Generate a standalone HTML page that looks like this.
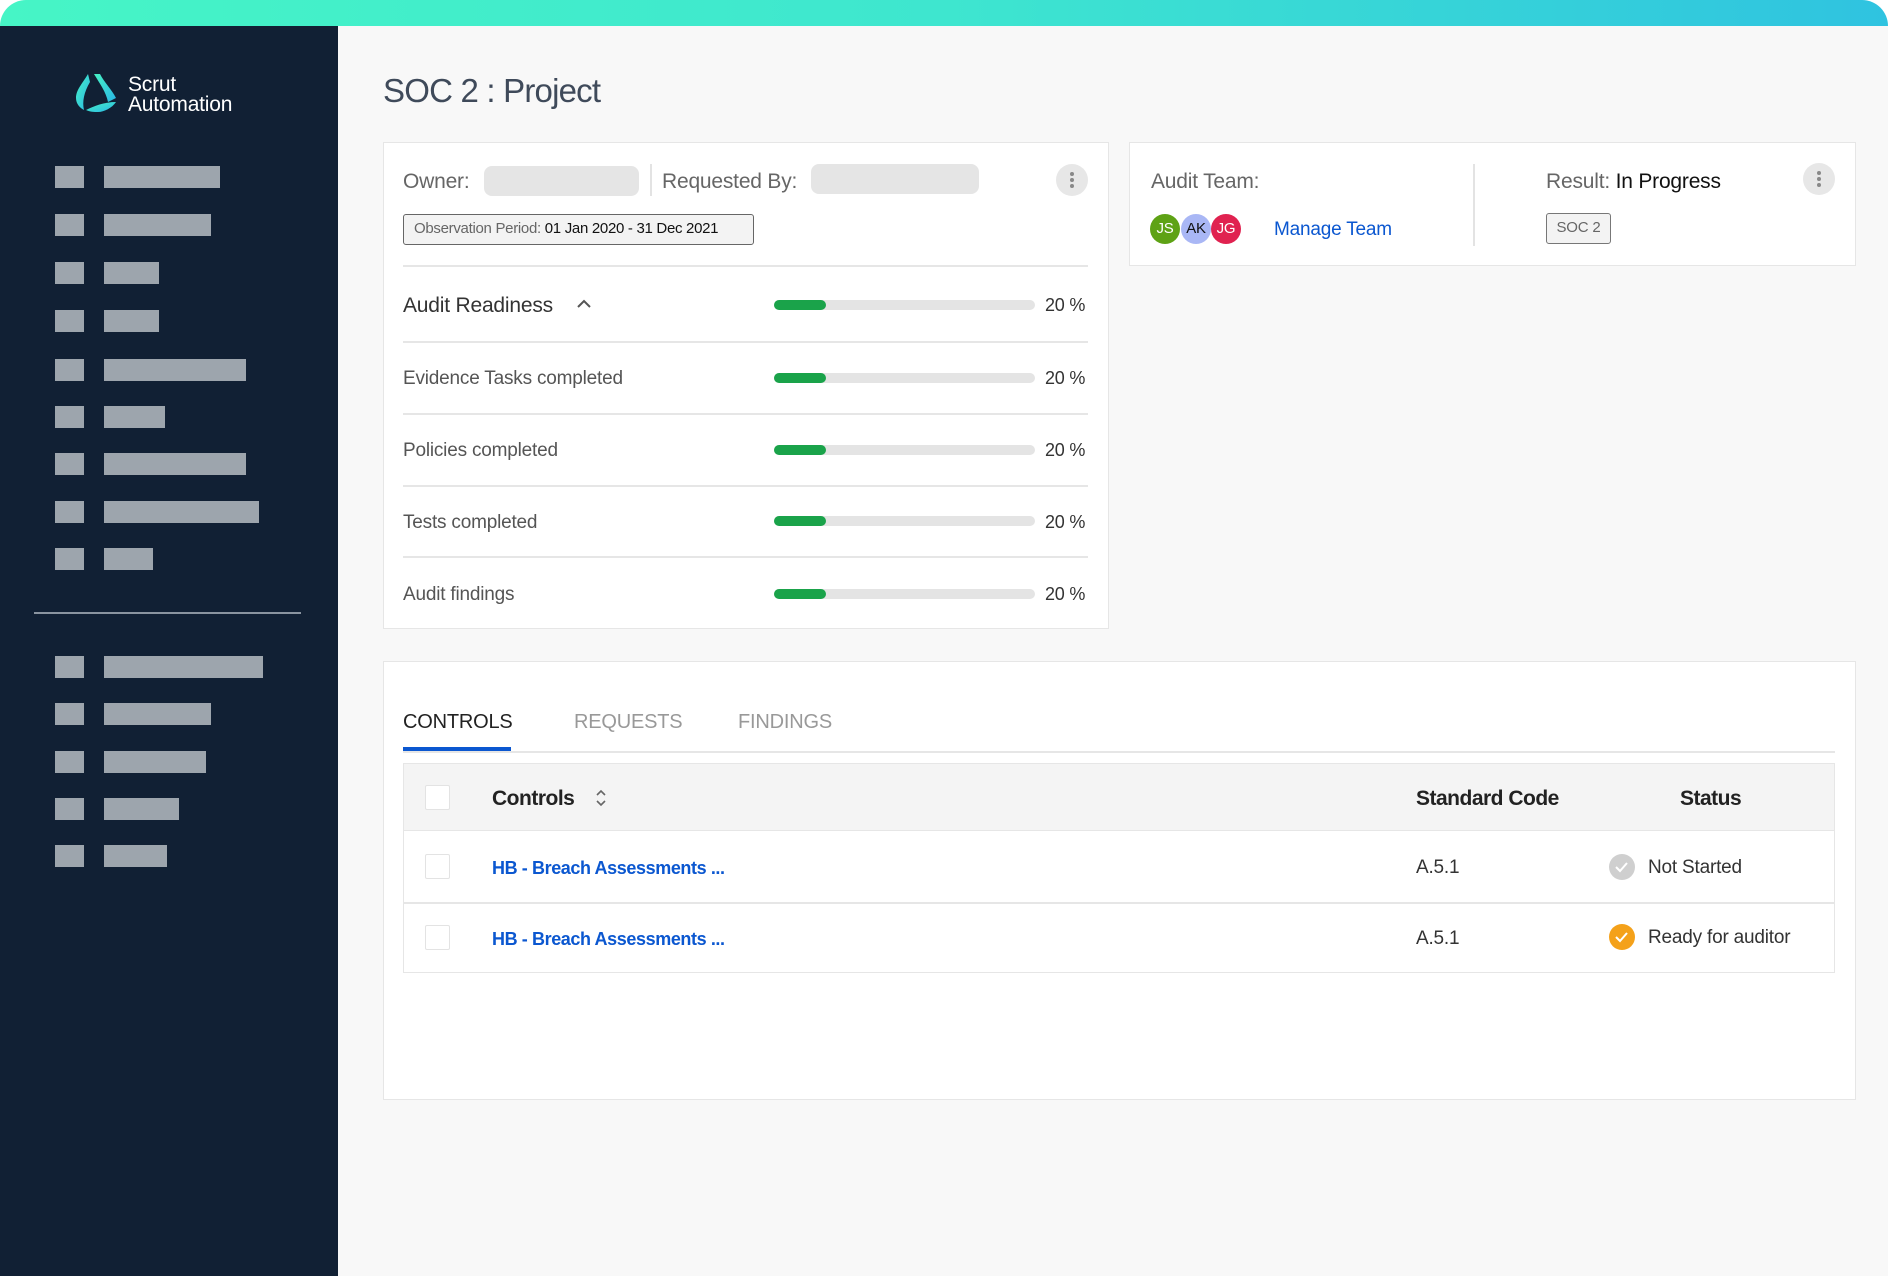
<!DOCTYPE html>
<html><head><meta charset="utf-8"><style>
*{box-sizing:border-box;margin:0;padding:0}
body{width:1888px;height:1276px;overflow:hidden;background:#fff;font-family:"Liberation Sans",sans-serif;position:relative;letter-spacing:-0.2px}
.a{position:absolute}
.top{left:0;top:0;width:1888px;height:40px;border-radius:26px 26px 0 0;background:linear-gradient(90deg,#46f5c6,#3ee6cf 50%,#2fc3e0)}
.side{left:0;top:26px;width:338px;height:1250px;background:#112034}
.main{left:338px;top:26px;width:1550px;height:1250px;background:#f8f8f8}
.sq{background:#9da5ad;width:29px;height:22px;left:55px}
.bar{background:#9da5ad;height:22px;left:104px}
.card{background:#fff;border:1.5px solid #e6e6e6}
.lbl{font-size:21px;color:#666}
.ph{background:#e5e5e5;border-radius:8px;height:30px}
.keb{width:32px;height:32px;border-radius:50%;background:#e7e7e7}
.keb i{position:absolute;left:14px;width:4px;height:4px;border-radius:50%;background:#888}
.pb{left:774px;width:261px;height:10px;border-radius:5px;background:#e4e4e4}
.pb b{position:absolute;left:0;top:0;height:10px;width:52px;border-radius:5px;background:#1aa34a}
.pct{left:1045px;font-size:18px;color:#333}
.row{left:403px;font-size:19px;color:#555}
.hr{height:1.5px;background:#e6e6e6}
.cb{width:25px;height:25px;border:1.5px solid #e3e3e3;background:#fff;border-radius:2px;left:425px}
.lnk{left:492px;font-size:18px;color:#0b57d0;font-weight:bold;letter-spacing:-0.4px}
</style></head><body>
<div class="a top"></div>
<div class="a side"></div>
<div class="a main"></div>
<svg class="a" style="left:74px;top:72px" width="44" height="42" viewBox="0 0 44 42">
<defs><linearGradient id="g" x1="0" y1="0" x2="1" y2="1"><stop offset="0" stop-color="#47f2c4"/><stop offset="1" stop-color="#29b6e6"/></linearGradient></defs>
<path d="M14 2 C8 12 2 18 2 26 C2 32 6 36 10 38 C8 30 10 20 16 10 Z" fill="url(#g)"/>
<path d="M20 2 L26 2 C30 10 38 18 42 26 L34 30 C32 20 26 12 20 2Z" fill="url(#g)"/>
<path d="M12 38 C20 34 30 30 42 30 C38 36 30 40 24 40 C20 40 16 40 12 38Z" fill="url(#g)"/>
</svg>
<div class="a" style="left:128px;top:75px;color:#fff;font-size:21px;line-height:20px">Scrut<br>Automation</div>
<div class="a sq" style="top:166px"></div><div class="a bar" style="top:166px;width:116px"></div>
<div class="a sq" style="top:214px"></div><div class="a bar" style="top:214px;width:107px"></div>
<div class="a sq" style="top:262px"></div><div class="a bar" style="top:262px;width:55px"></div>
<div class="a sq" style="top:310px"></div><div class="a bar" style="top:310px;width:55px"></div>
<div class="a sq" style="top:359px"></div><div class="a bar" style="top:359px;width:142px"></div>
<div class="a sq" style="top:406px"></div><div class="a bar" style="top:406px;width:61px"></div>
<div class="a sq" style="top:453px"></div><div class="a bar" style="top:453px;width:142px"></div>
<div class="a sq" style="top:501px"></div><div class="a bar" style="top:501px;width:155px"></div>
<div class="a sq" style="top:548px"></div><div class="a bar" style="top:548px;width:49px"></div>
<div class="a" style="left:34px;top:612px;width:267px;height:1.5px;background:#8a94a0"></div>
<div class="a sq" style="top:656px"></div><div class="a bar" style="top:656px;width:159px"></div>
<div class="a sq" style="top:703px"></div><div class="a bar" style="top:703px;width:107px"></div>
<div class="a sq" style="top:751px"></div><div class="a bar" style="top:751px;width:102px"></div>
<div class="a sq" style="top:798px"></div><div class="a bar" style="top:798px;width:75px"></div>
<div class="a sq" style="top:845px"></div><div class="a bar" style="top:845px;width:63px"></div>
<div class="a" style="left:383px;top:72px;font-size:33px;color:#3f4a5a;letter-spacing:-0.8px">SOC 2 : Project</div>
<div class="a card" style="left:383px;top:142px;width:726px;height:487px"></div>
<div class="a lbl" style="left:403px;top:170px">Owner:</div>
<div class="a ph" style="left:484px;top:166px;width:155px"></div>
<div class="a" style="left:650px;top:164px;width:1.5px;height:32px;background:#e3e3e3"></div>
<div class="a lbl" style="left:662px;top:170px">Requested By:</div>
<div class="a ph" style="left:811px;top:164px;width:168px"></div>
<div class="a keb" style="left:1056px;top:164px"><i style="top:8px"></i><i style="top:14px"></i><i style="top:20px"></i></div>
<div class="a" style="left:403px;top:214px;width:351px;height:31px;border:1.5px solid #666;border-radius:3px;background:#f3f3f3;font-size:15px;line-height:28px;padding-left:10px;color:#666;letter-spacing:-0.3px">Observation Period: <span style="color:#111">01 Jan 2020 - 31 Dec 2021</span></div>
<div class="a hr" style="left:403px;top:265px;width:685px"></div>
<div class="a" style="left:403px;top:294px;font-size:21px;color:#333">Audit Readiness</div>
<svg class="a" style="left:577px;top:299px" width="14" height="10"><path d="M1 8 L7 2 L13 8" stroke="#555" stroke-width="2" fill="none"/></svg>
<div class="a pb" style="top:300px"><b></b></div><div class="a pct" style="top:295px">20 %</div>
<div class="a hr" style="left:403px;top:341px;width:685px"></div>
<div class="a row" style="top:368px">Evidence Tasks completed</div>
<div class="a pb" style="top:373px"><b></b></div><div class="a pct" style="top:368px">20 %</div>
<div class="a hr" style="left:403px;top:413px;width:685px"></div>
<div class="a row" style="top:440px">Policies completed</div>
<div class="a pb" style="top:445px"><b></b></div><div class="a pct" style="top:440px">20 %</div>
<div class="a hr" style="left:403px;top:485px;width:685px"></div>
<div class="a row" style="top:512px">Tests completed</div>
<div class="a pb" style="top:516px"><b></b></div><div class="a pct" style="top:512px">20 %</div>
<div class="a hr" style="left:403px;top:556px;width:685px"></div>
<div class="a row" style="top:584px">Audit findings</div>
<div class="a pb" style="top:589px"><b></b></div><div class="a pct" style="top:584px">20 %</div>
<div class="a card" style="left:1129px;top:142px;width:727px;height:124px"></div>
<div class="a lbl" style="left:1151px;top:170px">Audit Team:</div>
<div class="a" style="left:1150px;top:214px;width:30px;height:30px;border-radius:50%;background:#5ea215;color:#fff;font-size:15px;line-height:30px;text-align:center">JS</div>
<div class="a" style="left:1181px;top:214px;width:30px;height:30px;border-radius:50%;background:#a9b7f5;color:#111;font-size:15px;line-height:30px;text-align:center">AK</div>
<div class="a" style="left:1211px;top:214px;width:30px;height:30px;border-radius:50%;background:#e02250;color:#fff;font-size:15px;line-height:30px;text-align:center">JG</div>
<div class="a" style="left:1274px;top:219px;font-size:19px;color:#0b57d0">Manage Team</div>
<div class="a" style="left:1473px;top:164px;width:1.5px;height:82px;background:#e3e3e3"></div>
<div class="a lbl" style="left:1546px;top:170px">Result: <span style="color:#111">In Progress</span></div>
<div class="a keb" style="left:1803px;top:163px"><i style="top:8px"></i><i style="top:14px"></i><i style="top:20px"></i></div>
<div class="a" style="left:1546px;top:213px;width:65px;height:31px;border:1.5px solid #777;border-radius:3px;background:#f3f3f3;font-size:15px;line-height:28px;text-align:center;color:#666">SOC 2</div>
<div class="a card" style="left:383px;top:661px;width:1473px;height:439px"></div>
<div class="a" style="left:403px;top:711px;font-size:20px;color:#222">CONTROLS</div>
<div class="a" style="left:574px;top:711px;font-size:20px;color:#999">REQUESTS</div>
<div class="a" style="left:738px;top:711px;font-size:20px;color:#999">FINDINGS</div>
<div class="a hr" style="left:403px;top:751px;width:1432px"></div>
<div class="a" style="left:403px;top:747px;width:108px;height:4px;background:#0b57d0"></div>
<div class="a" style="left:403px;top:763px;width:1432px;height:210px;border:1.5px solid #e6e6e6;background:#fff"></div>
<div class="a" style="left:404px;top:764px;width:1430px;height:67px;background:#f4f4f4;border-bottom:1.5px solid #e6e6e6"></div>
<div class="a cb" style="top:785px"></div>
<div class="a" style="left:492px;top:787px;font-size:21px;color:#222;font-weight:bold;letter-spacing:-0.5px">Controls</div>
<svg class="a" style="left:595px;top:788px" width="12" height="20"><path d="M2 7 L6 3 L10 7 M2 13 L6 17 L10 13" stroke="#666" stroke-width="1.6" fill="none"/></svg>
<div class="a" style="left:1416px;top:787px;font-size:21px;color:#222;font-weight:bold;letter-spacing:-0.5px">Standard Code</div>
<div class="a" style="left:1680px;top:787px;font-size:21px;color:#222;font-weight:bold;letter-spacing:-0.5px">Status</div>
<div class="a cb" style="top:854px"></div>
<div class="a lnk" style="top:858px">HB - Breach Assessments ...</div>
<div class="a" style="left:1416px;top:857px;font-size:19px;color:#333">A.5.1</div>
<svg class="a" style="left:1608px;top:853px" width="28" height="28"><circle cx="14" cy="14" r="13" fill="#cfcfcf"/><path d="M8 14 L12 18 L19 10" stroke="#fff" stroke-width="2" fill="none"/></svg>
<div class="a" style="left:1648px;top:857px;font-size:19px;color:#333">Not Started</div>
<div class="a hr" style="left:404px;top:902px;width:1430px"></div>
<div class="a cb" style="top:925px"></div>
<div class="a lnk" style="top:929px">HB - Breach Assessments ...</div>
<div class="a" style="left:1416px;top:928px;font-size:19px;color:#333">A.5.1</div>
<svg class="a" style="left:1608px;top:923px" width="28" height="28"><circle cx="14" cy="14" r="13" fill="#f4a11a"/><path d="M8 14 L12 18 L19 10" stroke="#fff" stroke-width="2" fill="none"/></svg>
<div class="a" style="left:1648px;top:927px;font-size:19px;color:#333">Ready for auditor</div>
</body></html>
